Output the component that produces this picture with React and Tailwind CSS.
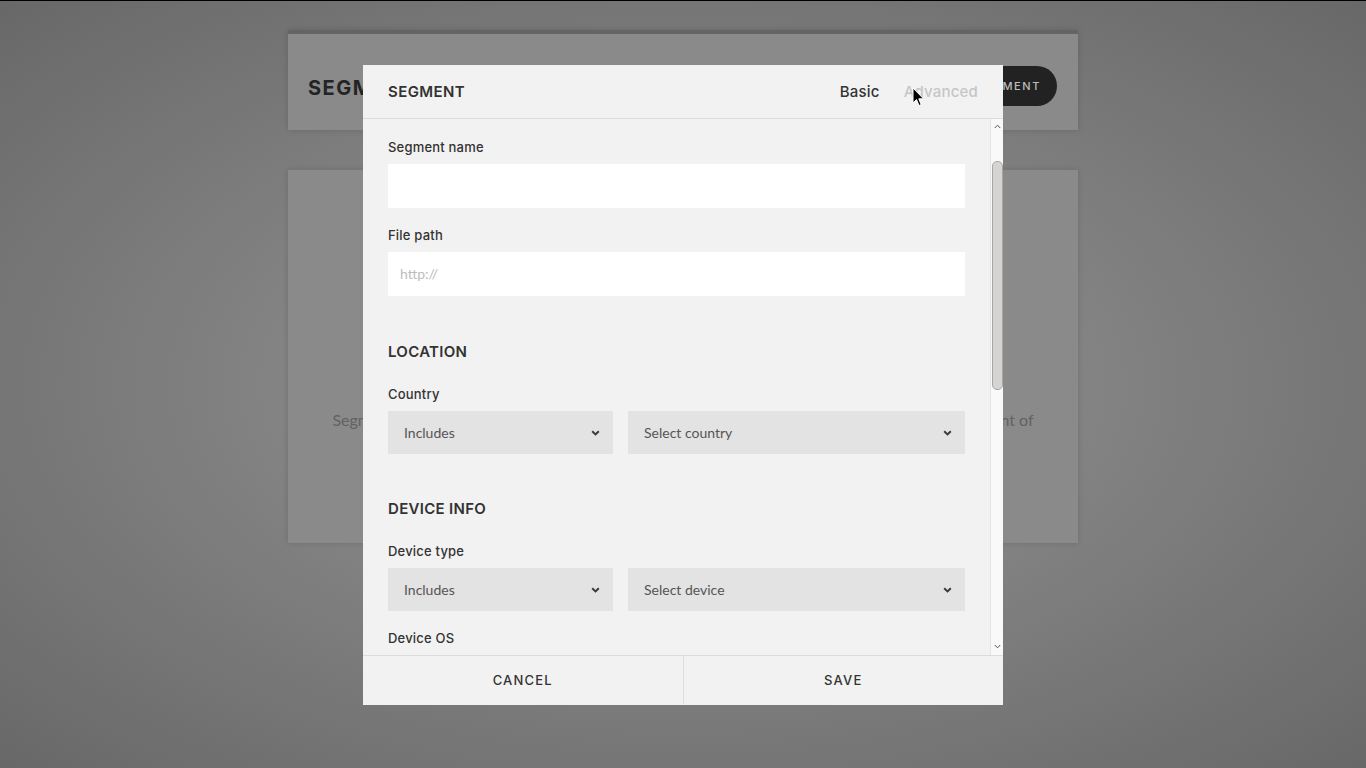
import React from "react";

const mont = { fontFamily: "Inter, 'DejaVu Sans', sans-serif" };
const src = { fontFamily: "Lato, 'Liberation Sans', sans-serif" };

function Chevron() {
  return (
    <svg width="9" height="6" viewBox="0 0 9 6" className="shrink-0">
      <path d="M1.2 1.2 L4.5 4.4 L7.8 1.2" fill="none" stroke="#3a3a3a" strokeWidth="2" />
    </svg>
  );
}

function Select({ text, className }) {
  return (
    <div className={"flex h-[43px] items-center justify-between bg-[#e3e3e3] pl-[16px] pr-[13px] " + className}>
      <span className="text-[14px] text-[#555]" style={src}>{text}</span>
      <Chevron />
    </div>
  );
}

function Label({ children, className = "" }) {
  return (
    <div className={"text-[13px] font-medium leading-[16px] text-[#333] tracking-[0.2px] " + className} style={mont}>
      {children}
    </div>
  );
}

function Heading({ children, className = "" }) {
  return (
    <div className={"text-[15px] font-semibold leading-[20px] text-[#333] tracking-[0.3px] " + className} style={mont}>
      {children}
    </div>
  );
}

export default function App() {
  return (
    <div className="relative h-[768px] w-[1366px] overflow-hidden border-t border-black bg-[radial-gradient(ellipse_at_center,#909090_0%,#848484_40%,#686868_100%)]">
      {/* background page */}
      <div className="mx-auto flex w-[790px] flex-col pt-[29px]">
        <div className="flex h-[100px] items-center justify-between border-t-4 border-[#646464] bg-[#8a8a8a] pl-[20px] pr-[21px] pt-[8px] shadow-[0_0_6px_rgba(0,0,0,0.15)]">
          <span className="mt-[4px] text-[20px] font-bold tracking-[1.5px] text-[#242424]" style={mont}>SEGMENTS</span>
          <div className="flex h-[40px] items-center rounded-full bg-[#222] px-[16px] text-[11px] font-medium tracking-[1.6px] text-[#bdbdbd]" style={mont}>
            + NEW SEGMENT
          </div>
        </div>
        <div className="mt-[40px] flex h-[373px] flex-col items-center bg-[#8a8a8a] pt-[239px] shadow-[0_0_6px_rgba(0,0,0,0.15)]">
          <p className="whitespace-nowrap text-[16px] leading-[22px] text-[#626262]" style={src}>
            Segments are groups of users with common attributes, so you can send notifications to a segment of
          </p>
          <p className="mt-[2px] whitespace-nowrap text-[16px] leading-[22px] text-[#626262]" style={src}>your audience.</p>
        </div>
      </div>

      {/* modal */}
      <div className="absolute inset-0 flex items-start justify-center pt-[64px]">
        <div className="flex h-[640px] w-[640px] flex-col bg-[#f2f2f2]">
          <div className="flex h-[54px] shrink-0 items-center justify-between border-b border-[#dcdcdc] pl-[25px] pr-[25px] pt-[1px]">
            <span className="text-[15px] font-semibold tracking-[0.4px] text-[#333]" style={mont}>SEGMENT</span>
            <div className="flex items-center gap-[24px] text-[15px] font-medium tracking-[0.2px]" style={mont}>
              <span className="text-[#333]">Basic</span>
              <span className="text-[#c6c6c6]">Advanced</span>
            </div>
          </div>

          <div className="flex min-h-0 flex-1">
            <div className="min-w-0 flex-1 overflow-hidden px-[25px] pt-[20px]">
              <Label>Segment name</Label>
              <div className="mt-[9px] h-[44px] bg-white" />
              <Label className="mt-[19px]">File path</Label>
              <div className="mt-[9px] flex h-[44px] items-center bg-white pl-[12px]">
                <span className="text-[14px] leading-[18px] text-[#bdbdbd]" style={src}>http://</span>
              </div>

              <Heading className="mt-[46px]">LOCATION</Heading>
              <Label className="mt-[24px]">Country</Label>
              <div className="mt-[9px] flex gap-[15px]">
                <Select text="Includes" className="w-[225px]" />
                <Select text="Select country" className="flex-1" />
              </div>

              <Heading className="mt-[45px]">DEVICE INFO</Heading>
              <Label className="mt-[24px]">Device type</Label>
              <div className="mt-[9px] flex gap-[15px]">
                <Select text="Includes" className="w-[225px]" />
                <Select text="Select device" className="flex-1" />
              </div>
              <Label className="mt-[19px]">Device OS</Label>
              <div className="mt-[9px] flex gap-[15px]">
                <Select text="Includes" className="w-[225px]" />
                <Select text="Select OS" className="flex-1" />
              </div>
            </div>

            {/* scrollbar */}
            <div className="flex w-[13px] shrink-0 flex-col items-center border-l border-[#e4e4e4] bg-[#f9f9f9]">
              <svg width="7" height="5" viewBox="0 0 7 5" className="mt-[5px]">
                <path d="M0.8 4 L3.5 1.2 L6.2 4" fill="none" stroke="#555" strokeWidth="1" />
              </svg>
              <div className="mt-[32px] h-[229px] w-[11px] rounded-[5px] border border-[#a8a6a4] bg-[#d6d4d2]" />
              <div className="flex-1" />
              <svg width="7" height="5" viewBox="0 0 7 5" className="mb-[6px]">
                <path d="M0.8 1 L3.5 3.8 L6.2 1" fill="none" stroke="#555" strokeWidth="1" />
              </svg>
            </div>
          </div>

          <div className="flex h-[50px] shrink-0 border-t border-[#dcdcdc] pb-[1px]">
            <div className="flex flex-1 items-center justify-center text-[13px] font-medium leading-[18px] tracking-[1.2px] text-[#333]" style={mont}>
              CANCEL
            </div>
            <div className="w-px bg-[#dcdcdc]" />
            <div className="flex flex-1 items-center justify-center text-[13px] font-medium leading-[18px] tracking-[1.2px] text-[#333]" style={mont}>
              SAVE
            </div>
          </div>
        </div>
      </div>

      {/* mouse cursor */}
      <svg className="absolute left-[912px] top-[86px]" width="13" height="21" viewBox="0 0 13 21">
        <path d="M1 1 L1 16 L4.5 12.5 L7 18.5 L9.2 17.6 L6.8 11.8 L11.5 11.8 Z" fill="#000" stroke="#fff" strokeWidth="1" strokeLinejoin="round" />
      </svg>
    </div>
  );
}
